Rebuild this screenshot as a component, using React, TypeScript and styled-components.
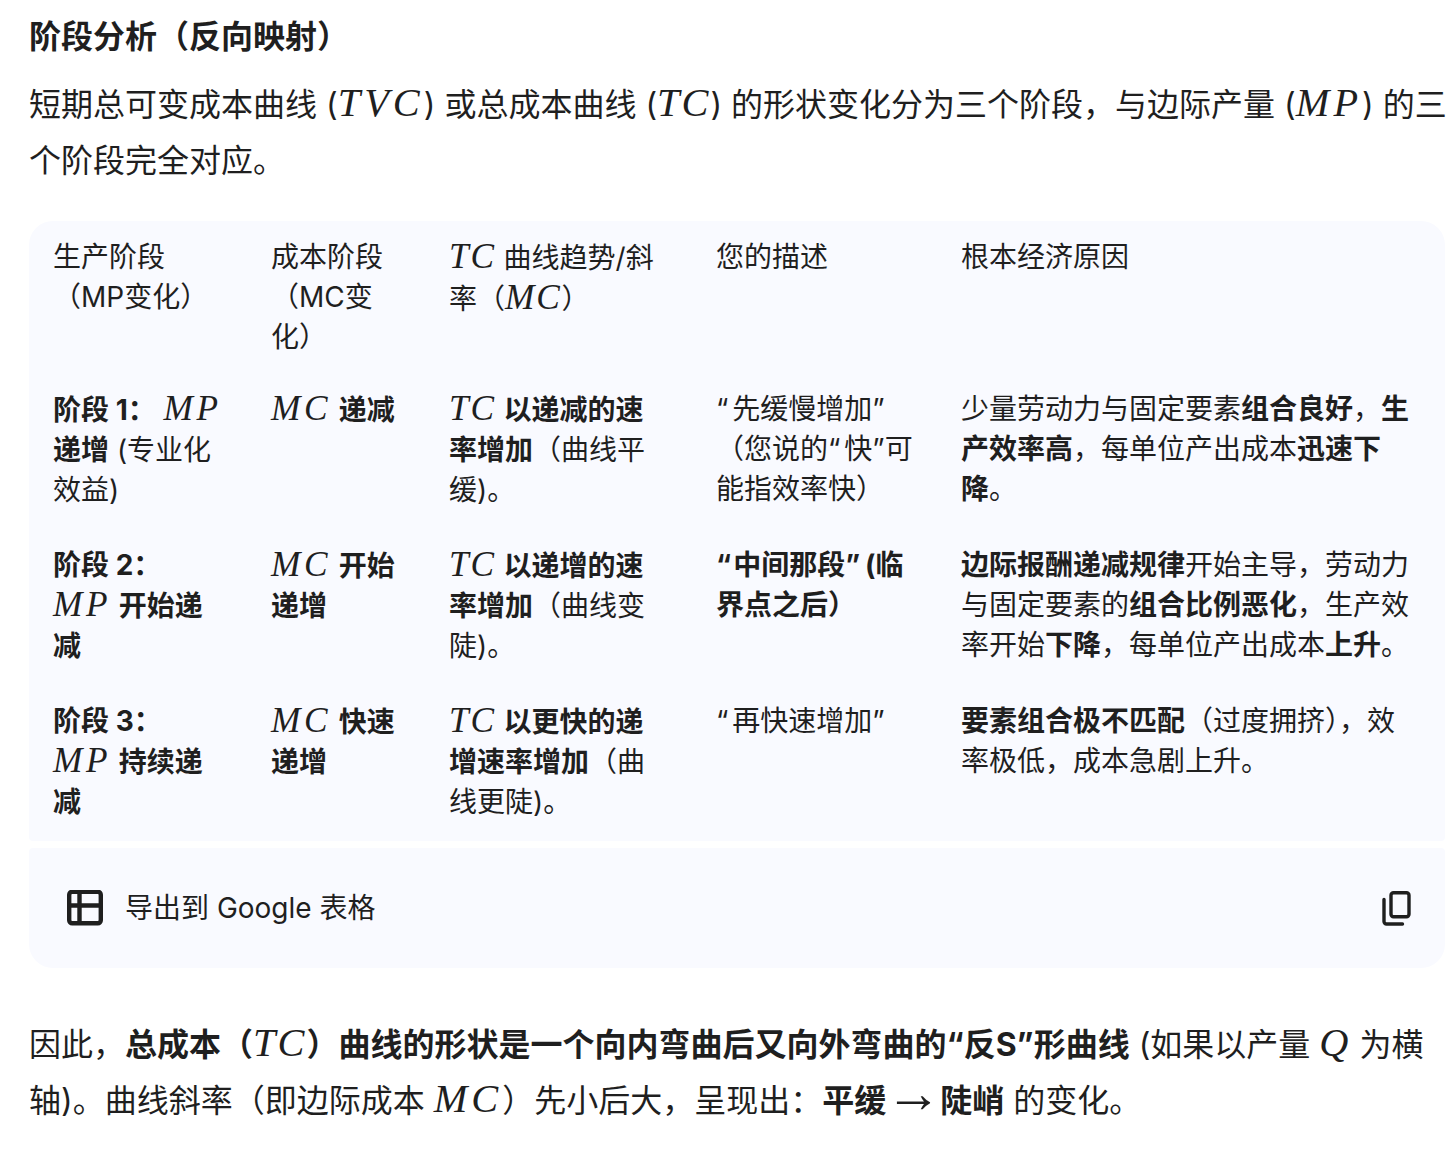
import { FC, ReactNode } from 'react'
import styled, { createGlobalStyle } from 'styled-components'

const GlobalStyle = createGlobalStyle`
	html, body {
		margin: 0;
		padding: 0;
		background: #ffffff;
	}
	body {
		color: #1f1f1f;
		font-family: Inter, 'Noto Sans CJK SC', sans-serif;
	}
`

type RowData = {
	cells: ReactNode[]
}

const Quote = styled.span<{ $gap: number }>`
	letter-spacing: ${({ $gap }) => $gap}px;
`

const headerCells: ReactNode[] = [
	<>生产阶段<br />（MP变化）</>,
	<>成本阶段<br />（MC变<br />化）</>,
	<><M>TC</M> 曲线趋势/斜<br />率（<M>MC</M>）</>,
	<>您的描述</>,
	<>根本经济原因</>,
]

const rows: RowData[] = [
	{
		cells: [
			<><b>阶段 1：</b> <M wide>MP</M><br /><b>递增</b> (专业化<br />效益)</>,
			<><M wide>MC</M> <b>递减</b></>,
			<><M>TC</M> <b>以递减的速<br />率增加</b>（曲线平<br />缓)。</>,
			<><Quote $gap={4}>“</Quote>先缓慢增加”<br />（您说的<Quote $gap={4}>“</Quote>快”可<br />能指效率快）</>,
			<>少量劳动力与固定要素<b>组合良好</b>，<b>生<br />产效率高</b>，每单位产出成本<b>迅速下<br />降</b>。</>,
		],
	},
	{
		cells: [
			<><b>阶段 2：</b><br /><M wide>MP</M> <b>开始递<br />减</b></>,
			<><M wide>MC</M> <b>开始<br />递增</b></>,
			<><M>TC</M> <b>以递增的速<br />率增加</b>（曲线变<br />陡)。</>,
			<><b><Quote $gap={2}>“</Quote>中间那段<Quote $gap={5}>”</Quote>(临<br />界点之后）</b></>,
			<><b>边际报酬递减规律</b>开始主导，劳动力<br />与固定要素的<b>组合比例恶化</b>，生产效<br />率开始<b>下降</b>，每单位产出成本<b>上升</b>。</>,
		],
	},
	{
		cells: [
			<><b>阶段 3：</b><br /><M wide>MP</M> <b>持续递<br />减</b></>,
			<><M wide>MC</M> <b>快速<br />递增</b></>,
			<><M>TC</M> <b>以更快的递<br />增速率增加</b>（曲<br />线更陡)。</>,
			<><Quote $gap={4}>“</Quote>再快速增加”</>,
			<><b>要素组合极不匹配</b>（过度拥挤），效<br />率极低，成本急剧上升。</>,
		],
	},
]

const columnWidths = [218, 178, 267, 245, 508]

function M({ children, wide }: { children: ReactNode; wide?: boolean }) {
	return <MathText $wide={wide}>{children}</MathText>
}

const App: FC = () => {
	return (
		<>
			<GlobalStyle />
			<Page>
				<Heading>阶段分析（反向映射）</Heading>
				<Paragraph>
					短期总可变成本曲线 (<M wide>TVC</M>) 或总成本曲线 (<M>TC</M>) 的形状变化分为三个阶段，与边际产量 (<M wide>MP</M>) 的三
					<br />
					个阶段完全对应。
				</Paragraph>
				<TablePanel>
					<Table>
						<colgroup>
							{columnWidths.map((width) => (
								<col key={width} width={width} />
							))}
						</colgroup>
						<thead>
							<tr>
								{headerCells.map((cell, i) => (
									<HeaderCell key={i}>{cell}</HeaderCell>
								))}
							</tr>
						</thead>
						<tbody>
							{rows.map((row, i) => (
								<BodyRow key={i}>
									{row.cells.map((cell, j) => (
										<BodyCell key={j}>{cell}</BodyCell>
									))}
								</BodyRow>
							))}
						</tbody>
					</Table>
				</TablePanel>
				<Footer>
					<ExportLabel>
						<TableIcon />
						<span>导出到 Google 表格</span>
					</ExportLabel>
					<CopyIcon />
				</Footer>
				<Conclusion>
					因此，<b>总成本（<M>TC</M>）曲线的形状是一个向内弯曲后又向外弯曲的“反S”形曲线</b> (如果以产量 <M>Q</M> 为横
					<br />
					轴)。曲线斜率（即边际成本 <M wide>MC</M>）先小后大，呈现出：<b>平缓</b> <Arrow>→</Arrow> <b>陡峭</b> 的变化。
				</Conclusion>
			</Page>
		</>
	)
}

const TableIcon: FC = () => (
	<svg width="36" height="36" viewBox="0 0 36 36" fill="none" stroke="#1f1f1f" strokeWidth="4.4">
		<rect x="2.2" y="1.7" width="31.6" height="31.6" rx="3" />
		<path d="M2 15.5h32M12.5 1.5v32" />
	</svg>
)

const CopyIcon: FC = () => (
	<svg width="30" height="36" viewBox="0 0 30 36" fill="none" stroke="#1f1f1f" strokeWidth="3.4" strokeLinecap="round">
		<rect x="10" y="2.7" width="18" height="24" rx="2.5" />
		<path d="M3 9.5v22a2.5 2.5 0 0 0 2.5 2.5h16" />
	</svg>
)

const Page = styled.div`
	width: 1416px;
	padding: 15px 0 0 29px;
`

const Heading = styled.div`
	font-size: 32px;
	line-height: 44px;
	font-weight: 700;
`

const MathText = styled.span<{ $wide?: boolean }>`
	font-family: 'Liberation Serif', serif;
	font-style: italic;
	font-weight: 400;
	font-size: 1.26em;
	letter-spacing: ${({ $wide }) => ($wide ? '0.1em' : '0.05em')};
`

const Arrow = styled.span`
	font-family: 'Liberation Serif', serif;
	font-size: 1.75em;
	line-height: 0;
	margin: 0 -10px;
`

const Paragraph = styled.div`
	margin-top: 18px;
	font-size: 32px;
	line-height: 56px;
	white-space: nowrap;

	${MathText} {
		line-height: 0;
	}
`

const Conclusion = styled(Paragraph)`
	margin-top: 49px;
`

const TablePanel = styled.div`
	margin-top: 32px;
	padding-bottom: 1px;
	background: #f9faff;
	border-radius: 24px 24px 4px 4px;
`

const Table = styled.table`
	width: 100%;
	table-layout: fixed;
	border-collapse: collapse;
	font-size: 28px;
	line-height: 40px;
	white-space: nowrap;
`

const HeaderCell = styled.th`
	padding: 16px 24px 15px;
	font-weight: 400;
	text-align: left;
	vertical-align: top;
`

const BodyRow = styled.tr`
	height: 156px;
`

const BodyCell = styled.td`
	padding: 17px 24px 15px;
	vertical-align: top;
`

const Footer = styled.div`
	margin-top: 7px;
	height: 120px;
	display: flex;
	align-items: center;
	justify-content: space-between;
	padding: 0 34px 0 38px;
	background: #f9faff;
	border-radius: 4px 4px 24px 24px;
`

const ExportLabel = styled.div`
	display: flex;
	align-items: center;
	gap: 22px;
	font-size: 28px;
	line-height: 40px;
`

export default App
